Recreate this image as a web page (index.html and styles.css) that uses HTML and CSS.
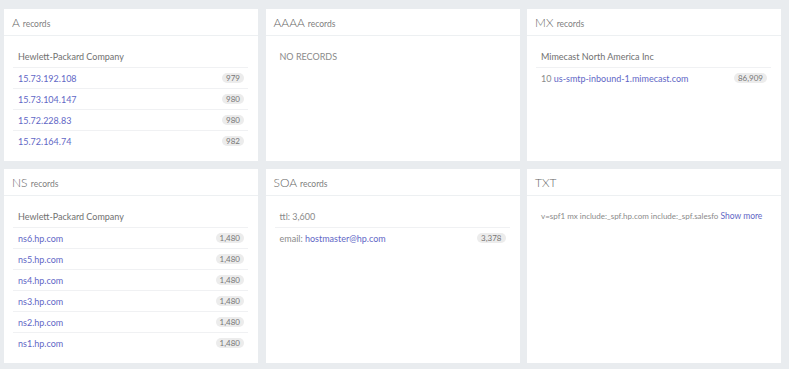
FILE: index.html
```html
<!DOCTYPE html>
<html lang="en">
<head>
    <meta charset="UTF-8">
    <title>DNS records</title>
    <link rel="stylesheet" href="styles.css">
</head>
<body>
    <div class="grid">
        <div class="card">
            <div class="card-head">A <small>records</small></div>
            <div class="card-body">
                <ul class="list">
                    <li class="list-title">Hewlett-Packard Company</li>
                    <li><a href="#">15.73.192.108</a><span class="badge">979</span></li>
                    <li><a href="#">15.73.104.147</a><span class="badge">980</span></li>
                    <li><a href="#">15.72.228.83</a><span class="badge">980</span></li>
                    <li><a href="#">15.72.164.74</a><span class="badge">982</span></li>
                </ul>
            </div>
        </div>
        <div class="card">
            <div class="card-head">AAAA <small>records</small></div>
            <div class="card-body">
                <ul class="list">
                    <li class="list-title empty">NO RECORDS</li>
                </ul>
            </div>
        </div>
        <div class="card">
            <div class="card-head">MX <small>records</small></div>
            <div class="card-body">
                <ul class="list">
                    <li class="list-title">Mimecast North America Inc</li>
                    <li><span class="muted">10 <a href="#">us-smtp-inbound-1.mimecast.com</a></span><span class="badge">86,909</span></li>
                </ul>
            </div>
        </div>
        <div class="card">
            <div class="card-head">NS <small>records</small></div>
            <div class="card-body">
                <ul class="list">
                    <li class="list-title">Hewlett-Packard Company</li>
                    <li><a href="#">ns6.hp.com</a><span class="badge">1,480</span></li>
                    <li><a href="#">ns5.hp.com</a><span class="badge">1,480</span></li>
                    <li><a href="#">ns4.hp.com</a><span class="badge">1,480</span></li>
                    <li><a href="#">ns3.hp.com</a><span class="badge">1,480</span></li>
                    <li><a href="#">ns2.hp.com</a><span class="badge">1,480</span></li>
                    <li><a href="#">ns1.hp.com</a><span class="badge">1,480</span></li>
                </ul>
            </div>
        </div>
        <div class="card">
            <div class="card-head">SOA <small>records</small></div>
            <div class="card-body">
                <ul class="list">
                    <li class="list-title empty">ttl: 3,600</li>
                    <li><span class="muted">email: <a href="#">hostmaster@hp.com</a></span><span class="badge">3,378</span></li>
                </ul>
            </div>
        </div>
        <div class="card">
            <div class="card-head">TXT</div>
            <div class="card-body">
                <p class="txt">v=spf1 mx include:_spf.hp.com include:_spf.salesfo <a href="#">Show more</a></p>
            </div>
        </div>
    </div>
</body>
</html>
```

FILE: styles.css
```css
*{
    margin: 0;
    padding: 0;
    box-sizing: border-box;
}
body{
    background: #e9ecef;
    font-family: Lato, "Noto Sans", sans-serif;
    color: #6f6f6f;
}
li{
    list-style: none;
}
a{
    color: #5f67c6;
    text-decoration: none;
}
.grid{
    display: grid;
    grid-template-columns: repeat(3, minmax(0, 1fr));
    column-gap: 7.5px;
    row-gap: 8px;
    padding: 9px 8px 7px 4px;
}
.card{
    background: #fff;
}
.card-head{
    height: 27px;
    line-height: 28px;
    padding-left: 8px;
    font-size: 12px;
    font-weight: 300;
    color: #666;
    border-bottom: 1px solid #edf0f2;
}
.card-head small{
    font-size: 8.5px;
    font-weight: 400;
    color: #808080;
}
.card-body{
    padding: 10px 10px 10px 9px;
}
.list li{
    height: 21px;
    display: flex;
    align-items: center;
    justify-content: space-between;
    padding: 0 4px 0 5px;
    font-size: 9px;
    border-top: 1px solid #f0f1f3;
}
.list .list-title{
    border-top: none;
    color: #707070;
}
.list .empty,
.muted{
    color: #8a8a8a;
}
.badge{
    font-size: 8px;
    line-height: 10px;
    padding: 0 4px;
    border-radius: 6px;
    background: #ececec;
    color: #777;
}
.txt{
    font-size: 8px;
    line-height: 21px;
    padding-left: 5px;
    color: #8a8a8a;
    white-space: nowrap;
}
.txt a{
    font-size: 8.5px;
}
```
